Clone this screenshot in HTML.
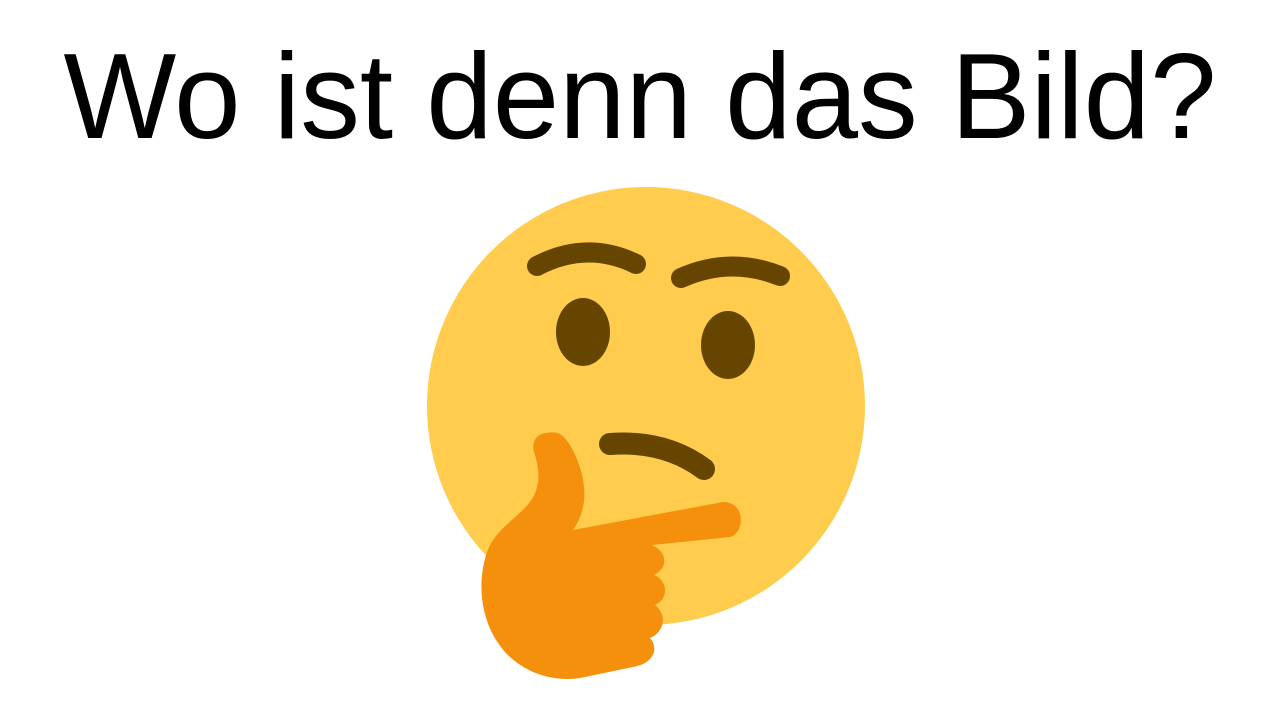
<!DOCTYPE html>
<html><head><meta charset="utf-8"><style>
html,body{margin:0;padding:0;background:#fff;width:1280px;height:720px;overflow:hidden}
</style></head><body>
<svg width="1280" height="720" viewBox="0 0 1280 720" xmlns="http://www.w3.org/2000/svg">
<text x="640" y="138" text-anchor="middle" textLength="1153" lengthAdjust="spacingAndGlyphs" font-family="Liberation Sans, Arial, sans-serif" font-size="122" fill="#000">Wo ist denn das Bild?</text>
<circle cx="646" cy="406" r="219" fill="#FFCC4D"/>
<g stroke="#664500" stroke-width="20" stroke-linecap="round" fill="none">
<path d="M537 266 Q587 240 636 264"/>
<path d="M681 278 Q730 256 780 276"/>
<path d="M610 444 Q665 440 704 469" stroke-width="22"/>
</g>
<ellipse cx="583" cy="332" rx="27" ry="34" fill="#664500"/>
<ellipse cx="728" cy="345" rx="27" ry="34" fill="#664500"/>
<path fill="#F4900C" d="M547 433 C538 433 531 441 534 452 C540 470 541 487 530 502 C518 518 496 528 487 552 C476 585 481 625 505 652 C525 674 555 682 580 678 L633 667 C652 664 660 650 650 638 C664 632 668 616 655 605 C670 598 667 580 654 575 C668 568 668 552 652 545 L730 537 C745 533 746 502 723 502 L573 530 C580 520 586 505 584 487 C582 465 570 440 560 434 C556 432 551 432 547 433 Z"/>
</svg>
</body></html>
